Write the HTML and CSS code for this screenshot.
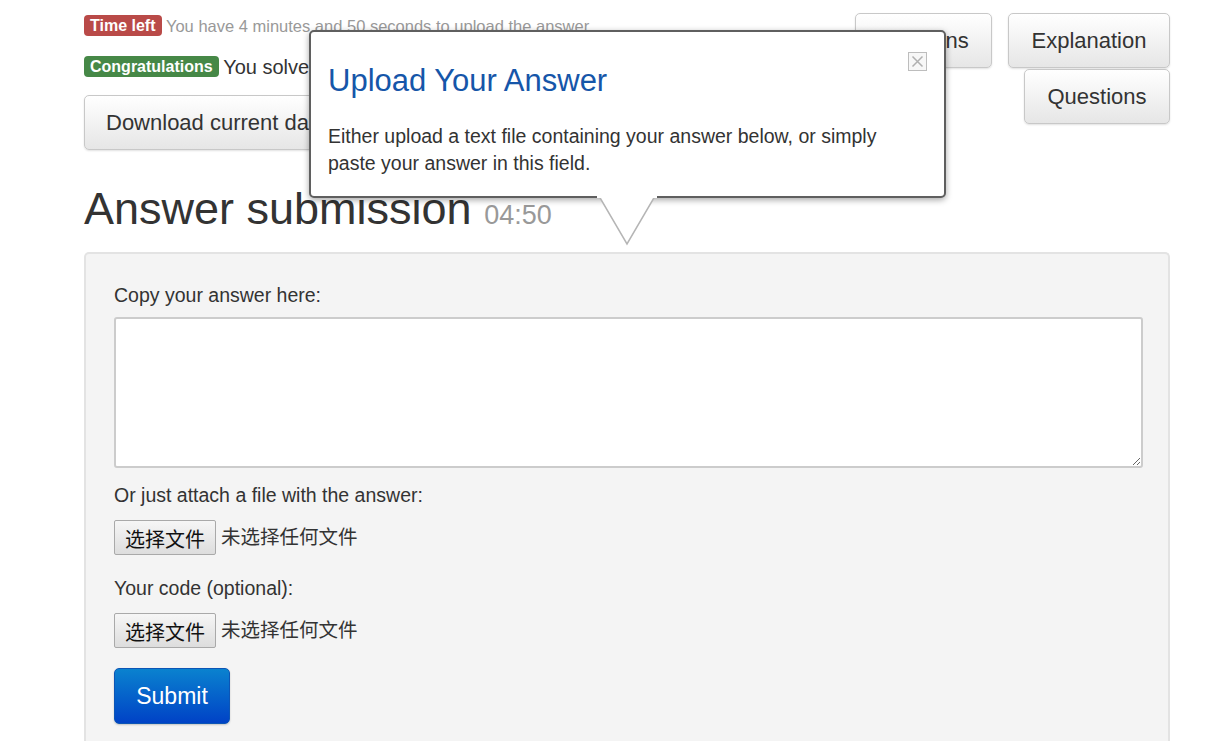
FILE: index.html
```html
<!DOCTYPE html>
<html>
<head>
<meta charset="utf-8">
<link rel="stylesheet" href="styles.css">
</head>
<body>
<div class="page">
  <div class="top">
    <div class="status">
      <div class="line"><span class="badge badge-red">Time left</span> <span class="muted">You have 4 minutes and 50 seconds to upload the answer</span></div>
      <div class="line line2"><span class="badge badge-green">Congratulations</span> <span class="dark">You solved this task! Now you can download current data</span></div>
      <button class="btn btn-download">Download current dataset</button>
    </div>
    <div class="nav">
      <button class="btn btn-instr">Solutions</button>
      <button class="btn btn-expl">Explanation</button>
      <button class="btn btn-quest">Questions</button>
    </div>
  </div>

  <h1 class="heading">Answer submission <small class="timer">04:50</small></h1>

  <div class="panel">
    <div class="label">Copy your answer here:</div>
    <textarea class="answer"></textarea>
    <div class="label label-gap">Or just attach a file with the answer:</div>
    <div class="file-row"><span class="file-btn">选择文件</span><span class="file-text">未选择任何文件</span></div>
    <div class="label label-gap2">Your code (optional):</div>
    <div class="file-row"><span class="file-btn">选择文件</span><span class="file-text">未选择任何文件</span></div>
    <button class="submit">Submit</button>
  </div>

  <div class="popover">
    <span class="close"><svg width="19" height="19" viewBox="0 0 19 19"><rect x="0.5" y="0.5" width="18" height="18" fill="#f7f7f7" stroke="#bdbdbd"/><path d="M4.5 4.5 L14.5 14.5 M14.5 4.5 L4.5 14.5" stroke="#b0b0b0" stroke-width="1.5"/></svg></span>
    <div class="pop-title">Upload Your Answer</div>
    <div class="pop-body">Either upload a text file containing your answer below, or simply paste your answer in this field.</div>
    <svg class="arrow" width="60" height="52" viewBox="0 0 60 52"><path d="M2 0 L30 48 L58 0" fill="#ffffff" stroke="#b5b5b5" stroke-width="1.5"/><rect x="0" y="0" width="60" height="2" fill="#ffffff"/></svg>
  </div>
</div>
</body>
</html>
```

FILE: styles.css
```css
html, body {
  margin: 0;
  padding: 0;
  background: #ffffff;
}
body {
  font-family: "Liberation Sans", Arial, "Noto Sans CJK SC", sans-serif;
  color: #333333;
  overflow: hidden;
}
.page {
  position: relative;
  width: 1086px;
  margin-left: 84px;
  padding-top: 13px;
}
.top {
  display: flex;
  justify-content: space-between;
  align-items: flex-start;
}
.status {
  display: flex;
  flex-direction: column;
  align-items: flex-start;
}
.line {
  height: 22px;
  line-height: 22px;
  margin-top: 2px;
  white-space: nowrap;
}
.line2 {
  margin-top: 19px;
}
.badge {
  display: inline-block;
  color: #ffffff;
  font-weight: bold;
  font-size: 16px;
  line-height: 21px;
  padding: 0 6px;
  border-radius: 4px;
  vertical-align: top;
}
.badge-red { background: #b94a48; }
.badge-green { background: #468847; }
.muted {
  color: #999999;
  font-size: 16.5px;
}
.dark {
  color: #333333;
  font-size: 20px;
}
.btn {
  font-family: "Liberation Sans", Arial, sans-serif;
  font-size: 22px;
  color: #333333;
  height: 55px;
  padding: 0 21px;
  border: 1px solid #c8c8c8;
  border-radius: 5px;
  background: linear-gradient(#ffffff, #e6e6e6);
  box-shadow: 0 1px 2px rgba(0,0,0,0.12);
}
.btn-download {
  margin-top: 17px;
  width: 330px;
  text-align: left;
}
.nav {
  width: 315px;
  display: flex;
  flex-wrap: wrap;
  justify-content: flex-end;
  column-gap: 16px;
  row-gap: 1px;
}
.btn-instr { width: 137px; }
.btn-expl { width: 162px; }
.btn-quest { width: 146px; }
.heading {
  font-size: 45px;
  font-weight: normal;
  line-height: 50px;
  margin: 34px 0 12px 0;
  color: #333333;
}
.timer {
  font-size: 27px;
  color: #999999;
}
.panel {
  background: #f4f4f4;
  border: 2px solid #e3e3e3;
  border-bottom: none;
  border-radius: 5px 5px 0 0;
  padding: 30px 25px 20px 28px;
  height: 470px;
}
.label {
  font-size: 19.5px;
  line-height: 22px;
  color: #333333;
}
.answer {
  display: block;
  box-sizing: border-box;
  width: 1029px;
  height: 151px;
  margin-top: 11px;
  border: 2px solid #cccccc;
  border-radius: 3px;
  background: #ffffff;
}
.label-gap { margin-top: 16px; }
.label-gap2 { margin-top: 23px; }
.file-row {
  display: flex;
  align-items: center;
  margin-top: 14px;
  height: 34px;
}
.file-btn {
  box-sizing: border-box;
  width: 102px;
  height: 35px;
  border: 1px solid #a9a9a9;
  border-radius: 2px;
  background: linear-gradient(#f6f6f6, #dddddd);
  font-family: "Noto Sans CJK SC", sans-serif;
  font-size: 20px;
  color: #111111;
  display: flex;
  align-items: center;
  justify-content: center;
  padding-top: 2px;
}
.file-text {
  margin-left: 5px;
  font-family: "Noto Sans CJK SC", sans-serif;
  font-size: 19.5px;
  color: #333333;
  margin-top: -4px;
}
.submit {
  display: block;
  margin-top: 21px;
  width: 116px;
  height: 56px;
  border: 1px solid #0c55b5;
  border-radius: 5px;
  background: linear-gradient(#0a82cf, #0042c6);
  color: #ffffff;
  font-family: "Liberation Sans", Arial, sans-serif;
  font-size: 23px;
  box-shadow: 0 1px 2px rgba(0,0,0,0.2);
}
.popover {
  position: absolute;
  left: 225px;
  top: 30px;
  box-sizing: border-box;
  width: 637px;
  height: 168px;
  background: #ffffff;
  border: 2px solid #5f5f5f;
  border-radius: 5px;
  box-shadow: 0 2px 6px rgba(0,0,0,0.35);
  padding: 31px 30px 0 17px;
}
.close {
  position: absolute;
  right: 17px;
  top: 20px;
  width: 19px;
  height: 19px;
}
.close svg { display: block; }
.pop-title {
  color: #1656a9;
  font-size: 31px;
  line-height: 36px;
}
.pop-body {
  margin-top: 24px;
  font-size: 19.5px;
  line-height: 27px;
  color: #333333;
}
.arrow {
  position: absolute;
  left: 286px;
  top: 164px;
}
```
